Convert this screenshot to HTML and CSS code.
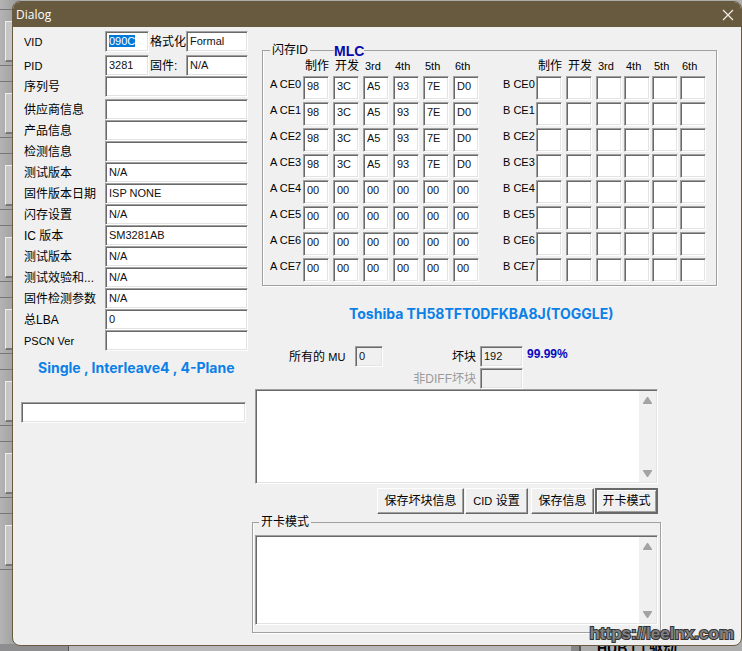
FILE: index.html
```
<!DOCTYPE html>
<html lang="zh-CN">
<head>
  <meta charset="UTF-8" />
  <meta name="viewport" content="width=device-width, initial-scale=1.0" />
  <title>Dialog</title>
  <link rel="stylesheet" href="styles.css">
</head>
<body>
  <div class="desktop">
    <!-- main window behind the dialog -->
    <div class="back-ports" id="backPorts"></div>
    <div class="back-bottom">
      <div class="back-left"></div>
      <div class="back-panel"></div>
      <div class="back-gap"></div>
      <div class="back-driver">HUB 门 驱动</div>
    </div>

    <main class="dialog">
      <header class="titlebar">
        <h1>Dialog</h1>
        <button class="close" aria-label="Close">
          <svg width="12" height="12" viewBox="0 0 12 12"><path d="M1 1 L11 11 M11 1 L1 11" stroke="#f4efe4" stroke-width="1.2" fill="none" /></svg>
        </button>
      </header>

      <div class="content">
        <section class="info">
          <div class="field split">
            <label class="latin" for="vid">VID</label>
            <input type="text" id="vid" value="090C" />
            <label for="format">格式化</label>
            <input type="text" id="format" value="Formal" />
          </div>
          <div class="field split second">
            <label class="latin" for="pid">PID</label>
            <input type="text" id="pid" value="3281" />
            <label for="firmware">固件:</label>
            <input type="text" id="firmware" value="N/A" />
          </div>
          <div class="field serial"><label for="serial">序列号</label><input type="text" id="serial" /></div>
          <div class="field"><label for="vendor">供应商信息</label><input type="text" id="vendor" /></div>
          <div class="field"><label for="product">产品信息</label><input type="text" id="product" /></div>
          <div class="field"><label for="inquiry">检测信息</label><input type="text" id="inquiry" /></div>
          <div class="field"><label for="testVer">测试版本</label><input type="text" id="testVer" value="N/A" /></div>
          <div class="field"><label for="fwDate">固件版本日期</label><input type="text" id="fwDate" value="ISP NONE" /></div>
          <div class="field"><label for="flashSet">闪存设置</label><input type="text" id="flashSet" value="N/A" /></div>
          <div class="field"><label for="icVer">IC 版本</label><input type="text" id="icVer" value="SM3281AB" /></div>
          <div class="field"><label for="testVer2">测试版本</label><input type="text" id="testVer2" value="N/A" /></div>
          <div class="field"><label for="checksum">测试效验和...</label><input type="text" id="checksum" value="N/A" /></div>
          <div class="field"><label for="fwParam">固件检测参数</label><input type="text" id="fwParam" value="N/A" /></div>
          <div class="field"><label for="lba">总LBA</label><input type="text" id="lba" value="0" /></div>
          <div class="field"><label class="latin" for="pscn">PSCN Ver</label><input type="text" id="pscn" /></div>
          <p class="plane">Single , Interleave4 , 4-Plane</p>
          <input type="text" class="status" aria-label="Status" />
        </section>

        <section class="details">
          <fieldset class="group flash">
            <legend>闪存ID</legend>
            <span class="cell-type">MLC</span>
            <table id="tableA"></table>
            <table id="tableB"></table>
          </fieldset>

          <div class="lower">
            <p class="chip">Toshiba TH58TFT0DFKBA8J(TOGGLE)</p>
            <div class="counts">
              <label for="mu">所有的 <small>MU</small></label>
              <input type="text" id="mu" value="0" readonly />
              <label for="bad" class="right">坏块</label>
              <input type="text" id="bad" value="192" readonly />
              <b class="percent">99.99%</b>
              <label for="diff" class="right diff">非DIFF坏块</label>
              <input type="text" id="diff" disabled />
            </div>

            <div class="memo">
              <textarea aria-label="Log"></textarea>
              <div class="scrollbar">
                <svg width="9" height="7" viewBox="0 0 9 7"><path d="M4 0 H5 L9 6 V7 H0 V6 Z" fill="#a3a3a3" /></svg>
                <svg width="9" height="7" viewBox="0 0 9 7"><path d="M0 0 H9 V1 L5 7 H4 L0 1 Z" fill="#a3a3a3" /></svg>
              </div>
            </div>

            <div class="buttons">
              <button class="wide">保存坏块信息</button>
              <button class="cid"><small>CID</small> 设置</button>
              <button>保存信息</button>
              <button class="default">开卡模式</button>
            </div>

            <fieldset class="group mode">
              <legend>开卡模式</legend>
              <div class="memo">
                <textarea aria-label="开卡模式"></textarea>
                <div class="scrollbar">
                  <svg width="9" height="7" viewBox="0 0 9 7"><path d="M4 0 H5 L9 6 V7 H0 V6 Z" fill="#a3a3a3" /></svg>
                  <svg width="9" height="7" viewBox="0 0 9 7"><path d="M0 0 H9 V1 L5 7 H4 L0 1 Z" fill="#a3a3a3" /></svg>
                </div>
              </div>
            </fieldset>
          </div>
        </section>
      </div>
    </main>
    <a class="watermark" href="https://leelnx.com">https://leelnx.com</a>
  </div>

  <script>
    const heads = ["制作", "开发", "3rd", "4th", "5th", "6th"];
    const flashId = ["98", "3C", "A5", "93", "7E", "D0"];
    const noId = ["00", "00", "00", "00", "00", "00"];
    const blank = ["", "", "", "", "", ""];

    function fillTable(id, bank, getRow) {
      let html = "<thead><tr><td></td>";
      heads.forEach(h => html += `<th scope="col">${h}</th>`);
      html += "</tr></thead><tbody>";
      for (let i = 0; i < 8; i++) {
        html += `<tr><th scope="row">${bank} CE${i}</th>`;
        getRow(i).forEach((v, c) => {
          html += `<td><input type="text" value="${v}" aria-label="${bank} CE${i} ${heads[c]}" /></td>`;
        });
        html += "</tr>";
      }
      document.getElementById(id).innerHTML = html + "</tbody>";
    }
    fillTable("tableA", "A", i => i < 4 ? flashId : noId);
    fillTable("tableB", "B", () => blank);

    document.getElementById("backPorts").innerHTML = '<div class="port"><span></span></div>'.repeat(8);

    const vid = document.getElementById("vid");
    vid.focus();
    vid.select();
  </script>
</body>
</html>
```
FILE: styles.css
```
:root {
  --face: #f0f0f0;
  --shadow: #a0a0a0;
  --dark: #696969;
  --light: #e3e3e3;
  --title: #685a3f;
}
* {
  box-sizing: border-box;
}
body {
  margin: 0;
  background: #adadad;
  color: #000;
  font: 12px/16px "Liberation Sans", "Noto Sans CJK SC", sans-serif;
}
h1, p {
  margin: 0;
}
small {
  font-size: 11px;
}
.desktop {
  position: relative;
  min-height: 100vh;
  padding: 1px 0 5px 12px;
  overflow: hidden;
}

/* window behind */
.back-ports {
  position: absolute;
  inset: 0 auto 0 0;
  width: 20px;
  padding-top: 9px;
  background: linear-gradient(90deg, #b4b4b4, #999);
}
.port {
  height: 57px;
  margin-bottom: 15px;
  padding: 11px 0 0 5px;
  border-top: 1px solid #777;
  border-bottom: 1px solid #777;
}
.port span {
  display: block;
  height: 41px;
  background: #c6c6c6;
  border: 1px solid #eee;
  border-bottom: 2px solid #777;
}
.back-bottom {
  position: absolute;
  inset: auto 0 0 0;
  display: flex;
  height: 7px;
  background: #b9b9bb;
  overflow: hidden;
}
.back-left {
  width: 69px;
  background: #8e8e90;
  border-right: 1px solid #555;
}
.back-panel {
  flex: 1;
}
.back-gap {
  width: 10px;
  background: #888;
  border-right: 2px solid #555;
}
.back-driver {
  width: 161px;
  padding-left: 16px;
  background: #adadad;
  font-size: 14px;
  font-weight: bold;
  line-height: 9px;
}

.dialog {
  position: relative;
  background: var(--face);
  border: 1px solid var(--title);
  border-radius: 8px;
  overflow: hidden;
}
.titlebar {
  display: flex;
  justify-content: space-between;
  align-items: center;
  height: 25px;
  padding: 0 6px 0 3px;
  background: var(--title);
  color: #fff;
}
.titlebar h1 {
  font: 12px/16px "Open Sans", "Noto Sans", sans-serif;
}
.close {
  display: flex;
  padding: 1px;
  background: none;
  border: none;
}
.content {
  display: grid;
  grid-template-columns: 231px 1fr;
  padding: 4px 24px 12px 8px;
}

input, textarea, .memo {
  border: 1px solid;
  border-color: var(--shadow) #fff #fff var(--shadow);
  border-radius: 0;
  box-shadow: inset 1px 1px var(--dark), inset -1px -1px var(--light);
  background: #fff;
}
input {
  width: 100%;
  min-width: 0;
  height: 21px;
  padding: 0 3px 1px;
  color: #111;
  font: 11px/14px "Liberation Sans", sans-serif;
  outline: none;
}
input::selection {
  background: #0078d7;
  color: #fff;
}
input[readonly], input:disabled {
  background: var(--face);
}

/* left column */
.field {
  display: grid;
  grid-template-columns: 81px 143px;
  align-items: center;
  height: 21px;
  padding-left: 3px;
}
.split {
  grid-template-columns: 81px 44px 37px 62px;
  margin-bottom: 3px;
}
.split.second {
  margin-bottom: 0;
}
.serial {
  margin-bottom: 2px;
}
.field label {
  white-space: nowrap;
}
.split label + input + label {
  padding-left: 1px;
}
.latin {
  font-size: 11px;
}
.plane, .chip {
  color: #0a80e8;
  font: 700 14px/16px Inter, "Liberation Sans", sans-serif;
}
.plane {
  margin: 9px 0 26px 17px;
  white-space: nowrap;
}
.status {
  width: 225px;
}

/* right column */
.group {
  margin: 0;
  border: 1px solid var(--shadow);
  box-shadow: 1px 1px #fff, inset 1px 0 #fff;
}
.group legend {
  padding: 0 2px;
}
.flash {
  position: relative;
  display: flex;
  justify-content: space-between;
  margin: 11px 0 0 10px;
  padding: 0 8px 1px 7px;
}
.cell-type {
  position: absolute;
  top: -15px;
  left: 71px;
  background: var(--face);
  color: #0808a8;
  font-size: 14px;
  font-weight: bold;
}
.flash table {
  border-collapse: collapse;
}
.flash th, .flash td {
  padding: 0;
  font-weight: normal;
  text-align: left;
  vertical-align: top;
}
.flash thead th {
  height: 18px;
  padding-left: 2px;
  font-size: 11px;
}
.flash thead th:nth-child(-n+3) {
  font-size: 12px;
}
.flash tbody th {
  width: 33px;
  font-size: 11px;
  white-space: nowrap;
}
.flash tbody td {
  width: 30px;
  height: 26px;
}
.flash td input {
  display: block;
  width: 26px;
  height: 24px;
  padding: 0 3px 4px;
}
#tableB tbody td:nth-child(n+4) {
  width: 28px;
}

.lower {
  padding-right: 56px;
}
.chip {
  margin: 20px 0 24px 97px;
  white-space: nowrap;
}
.counts {
  display: grid;
  grid-template-columns: 66px 28px 1fr 43px 138px;
  grid-auto-rows: 21px;
  row-gap: 1px;
  align-items: center;
  padding-left: 37px;
}
.counts .right {
  padding-right: 4px;
  text-align: right;
}
.counts .diff {
  grid-column: 1 / 4;
  color: #9a9a9a;
}
.percent {
  padding: 0 0 6px 4px;
  color: #0808c0;
}
.memo {
  display: flex;
  height: 95px;
  margin-left: 3px;
  margin-right: 3px;
  padding: 1px;
}
.memo textarea {
  flex: 1;
  min-width: 0;
  border: none;
  box-shadow: none;
  outline: none;
  resize: none;
}
.scrollbar {
  display: flex;
  flex-direction: column;
  justify-content: space-between;
  align-items: center;
  width: 17px;
  padding: 6px 0 5px;
  background: var(--face);
}
.buttons {
  display: flex;
  justify-content: flex-end;
  gap: 1px;
  margin: 4px 3px 0 0;
}
.buttons button {
  width: 63px;
  height: 26px;
  padding: 0;
  background: var(--face);
  border: 1px solid;
  border-color: #fff var(--dark) var(--dark) #fff;
  box-shadow: inset -1px -1px var(--shadow);
  color: #000;
  font: inherit;
}
.buttons .wide {
  width: 87px;
}
.buttons .cid {
  margin-right: 2px;
}
.buttons .default {
  border: 2px solid var(--dark);
  box-shadow: inset 1px 1px #fff, inset -1px -1px var(--shadow);
}
.mode {
  padding: 5px 0 7px;
}
.mode legend {
  margin-left: 6px;
}
.mode .memo {
  height: 90px;
  margin: 0 2px;
}

.watermark {
  position: absolute;
  right: 8px;
  bottom: 8px;
  color: #808080;
  font: bold 17px/18px "Liberation Sans", sans-serif;
  text-decoration: none;
  -webkit-text-stroke: 2px #333;
  paint-order: stroke fill;
}
```
